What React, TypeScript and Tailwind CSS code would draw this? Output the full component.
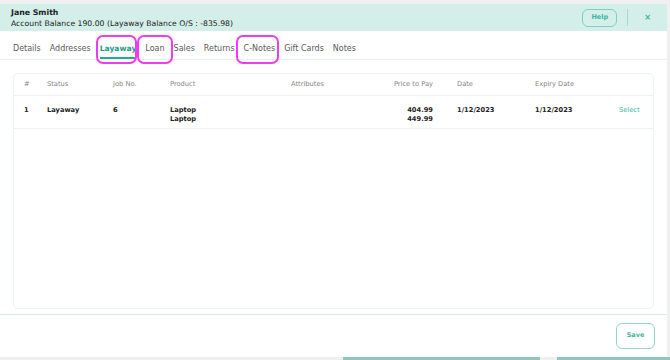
import React from 'react';

const tabs = ['Details', 'Addresses', 'Layaway', 'Loan', 'Sales', 'Returns', 'C-Notes', 'Gift Cards', 'Notes'];

const cols = 'grid grid-cols-[23px_66px_57px_121px_90px_76px_78px_84px_1fr] pl-[10px]';

const Highlight: React.FC<{ className: string }> = ({ className }) => (
  <div className={`absolute border-2 border-[#f03cf0] rounded-[7px] pointer-events-none ${className}`} />
);

export default function App() {
  return (
    <div className="relative w-[670px] h-[360px] overflow-hidden bg-[#efefef] text-[#222] font-['DejaVu_Sans',sans-serif]">
      <div className="h-[4px]" />
      <div className="w-[667px] h-[353px] bg-white flex flex-col">
        {/* header */}
        <div className="h-[27px] bg-[#d4eeea] flex items-center justify-between pl-[11px] pr-[16px]">
          <div className="flex flex-col leading-[11px]">
            <span className="text-[7.8px] font-bold">Jane Smith</span>
            <span className="text-[7.7px]">Account Balance 190.00 (Layaway Balance O/S : -835.98)</span>
          </div>
          <div className="flex items-center">
            <button className="w-[35px] h-[18px] rounded-[6px] border border-[#7fd0c2] text-[6.5px] font-bold text-[#3fb5a0]">Help</button>
            <div className="w-px h-[17px] bg-[#a9d8cf] ml-[10px] mr-[16px]" />
            <span className="text-[8px] font-bold text-[#3fb5a0] leading-none">×</span>
          </div>
        </div>

        {/* tabs */}
        <div className="h-[29px] border-b border-[#e5f2f0] flex items-end pl-[13px] gap-[9px]">
          {tabs.map((t) => (
            <div
              key={t}
              className={`h-[19px] flex items-center border-b-2 ${
                t === 'Layaway'
                  ? 'border-[#2aa893] text-[#1f9e89] font-bold text-[7.6px]'
                  : 'border-transparent text-[#5a5a5a] text-[8px]'
              }`}
            >
              {t}
            </div>
          ))}
        </div>

        {/* table */}
        <div className="px-[13px] pt-[13px]">
          <div className="h-[236px] border border-[#eef4f3] rounded-[5px] text-[6.7px]">
            <div className={`${cols} h-[22px] items-center text-[#858585] border-b border-[#eef1f0]`}>
              <span>#</span>
              <span>Status</span>
              <span>Job No.</span>
              <span>Product</span>
              <span>Attributes</span>
              <span className="text-right pr-[24px]">Price to Pay</span>
              <span>Date</span>
              <span>Expiry Date</span>
              <span />
            </div>
            <div className={`${cols} h-[33px] pt-[10px] font-bold leading-[9px] border-b border-[#eef1f0]`}>
              <span>1</span>
              <span>Layaway</span>
              <span>6</span>
              <span className="flex flex-col">
                <span>Laptop</span>
                <span>Laptop</span>
              </span>
              <span />
              <span className="flex flex-col items-end pr-[24px]">
                <span>404.99</span>
                <span>449.99</span>
              </span>
              <span>1/12/2023</span>
              <span>1/12/2023</span>
              <span className="font-normal text-[#3fb5a0]">Select</span>
            </div>
          </div>
        </div>

        {/* footer */}
        <div className="mt-[5px] border-t border-[#d6efeb] flex-1 flex justify-end items-start pt-[8px] pr-[12px]">
          <button className="w-[39px] h-[26px] rounded-[6px] border border-[#8fd6ca] text-[6.5px] font-bold text-[#3fb5a0]">Save</button>
        </div>
      </div>
      <div className="h-[3px] flex">
        <div className="w-[343px]" />
        <div className="w-[197px] bg-[#8fc7bd]" />
        <div className="w-[17px]" />
        <div className="flex-1 bg-[#8fc7bd]" />
      </div>

      <Highlight className="left-[96px] top-[35px] w-[41px] h-[29px]" />
      <Highlight className="left-[137px] top-[35px] w-[36px] h-[29px]" />
      <Highlight className="left-[236px] top-[35px] w-[43px] h-[29px]" />
    </div>
  );
}
